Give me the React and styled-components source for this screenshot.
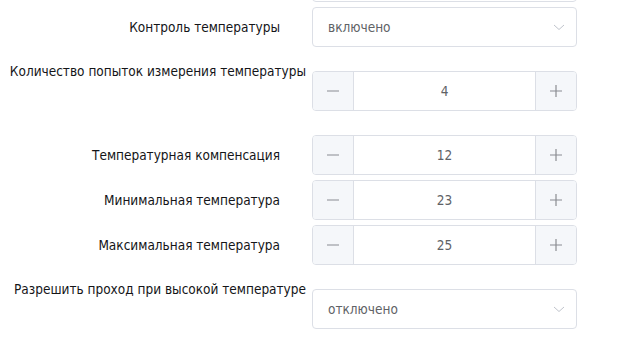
import React from 'react'
import styled, { createGlobalStyle } from 'styled-components'

const Global = createGlobalStyle`
body{
  margin:0;
  background:#fff;
  font-family:"DejaVu Sans Condensed","DejaVu Sans","Liberation Sans",sans-serif;
  font-stretch:condensed;
}
`;

const Form = styled.div`
width:620px;
height:338px;
overflow:hidden;
`;

const Inner = styled.div`
display:flex;
flex-direction:column;
margin-top:-38px;
`;

const Row = styled.div`
display:grid;
grid-template-columns:312px 265px;
align-items:${p => (p.$tall ? 'start' : 'center')};
margin-bottom:${p => p.$mb}px;
`;

const Label = styled.div`
text-align:right;
font-size:13.5px;
color:#141518;
white-space:nowrap;
line-height:${p => (p.$tall ? '20px' : '40px')};
padding-right:${p => (p.$tall ? '6px' : '32px')};
`;

const Control = styled.div`
margin-top:${p => (p.$tall ? '10px' : '0')};
`;

const SelectBox = styled.div`
box-sizing:border-box;
height:40px;
border:1px solid #dcdfe6;
border-radius:4px;
display:flex;
align-items:center;
justify-content:space-between;
padding:0 10px 0 15px;
font-size:13.5px;
color:#606266;
background:#fff;
`;

const NumberBox = styled.div`
box-sizing:border-box;
height:40px;
border:1px solid #dcdfe6;
border-radius:4px;
display:flex;
overflow:hidden;
`;

const StepButton = styled.div`
width:40px;
flex:none;
display:flex;
align-items:center;
justify-content:center;
background:#f5f7fa;
color:#909399;
${p => (p.$side === 'left' ? 'border-right:1px solid #dcdfe6;' : 'border-left:1px solid #dcdfe6;')}
`;

const Value = styled.div`
flex:1;
display:flex;
align-items:center;
justify-content:center;
font-size:13.5px;
color:#606266;
`;

const Chevron = () => (
  <svg width="14" height="14" viewBox="0 0 14 14">
    <polyline points="2,5 7,9.5 12,5" fill="none" stroke="#c0c4cc" strokeWidth="1" />
  </svg>
);

const Minus = () => (
  <svg width="12" height="12" viewBox="0 0 12 12">
    <line x1="0" y1="6" x2="12" y2="6" stroke="#8a8c91" strokeWidth="1.2" />
  </svg>
);

const Plus = () => (
  <svg width="12" height="12" viewBox="0 0 12 12">
    <line x1="0" y1="6" x2="12" y2="6" stroke="#8a8c91" strokeWidth="1.2" />
    <line x1="6" y1="0" x2="6" y2="12" stroke="#8a8c91" strokeWidth="1.2" />
  </svg>
);

const Select = ({ value }) => (
  <SelectBox>
    <span>{value}</span>
    <Chevron />
  </SelectBox>
);

const Stepper = ({ value }) => (
  <NumberBox>
    <StepButton $side="left"><Minus /></StepButton>
    <Value>{value}</Value>
    <StepButton $side="right"><Plus /></StepButton>
  </NumberBox>
);

const rows = [
  { label: '', kind: 'select', value: '', mb: 5 },
  { label: 'Контроль температуры', kind: 'select', value: 'включено', mb: 14 },
  { label: 'Количество попыток измерения температуры', kind: 'number', value: 4, tall: true, mb: 24 },
  { label: 'Температурная компенсация', kind: 'number', value: 12, mb: 5 },
  { label: 'Минимальная температура', kind: 'number', value: 23, mb: 5 },
  { label: 'Максимальная температура', kind: 'number', value: 25, mb: 14 },
  { label: 'Разрешить проход при высокой температуре', kind: 'select', value: 'отключено', tall: true, mb: 0 },
];

const App = () => {
  return (
    <Form>
      <Global />
      <Inner>
        {rows.map((r, i) => (
          <Row key={i} $tall={r.tall} $mb={r.mb}>
            <Label $tall={r.tall}>{r.label}</Label>
            <Control $tall={r.tall}>
              {r.kind === 'select' ? <Select value={r.value} /> : <Stepper value={r.value} />}
            </Control>
          </Row>
        ))}
      </Inner>
    </Form>
  )
}

export default App
